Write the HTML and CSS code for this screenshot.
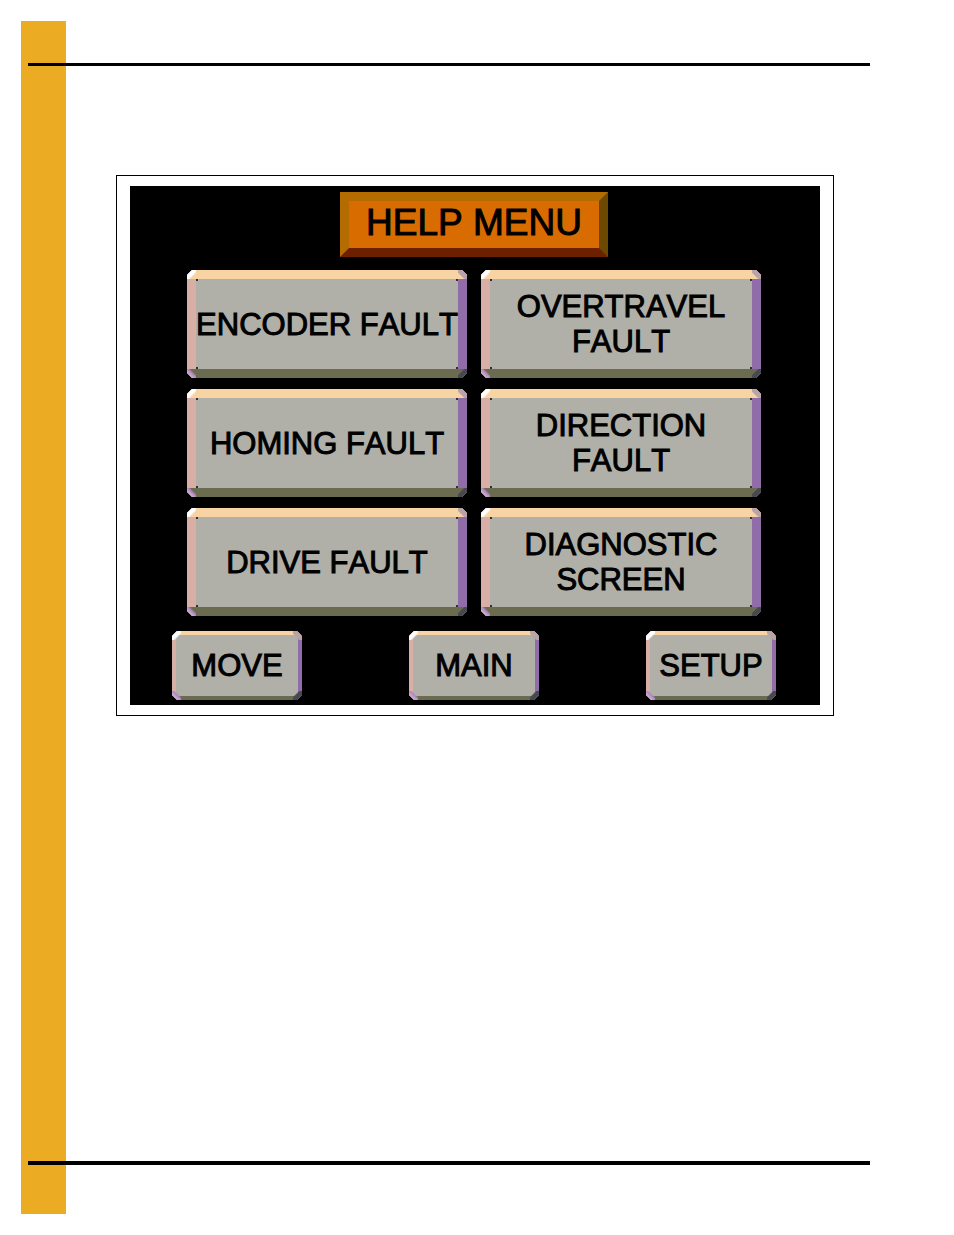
FILE: index.html
```
<!DOCTYPE html>
<html lang="en">
<head>
    <meta charset="UTF-8">
    <meta name="viewport" content="width=device-width, initial-scale=1.0">
    <title>Help Menu</title>
    <link rel="stylesheet" href="styles.css">
</head>
<body>

    <div class="page">
        <hr class="rule rule-top">
        <main class="frame">
            <div class="screen">
                <h1 class="title">HELP MENU</h1>
                <div class="faults">
                    <button type="button" class="key">ENCODER FAULT</button>
                    <button type="button" class="key">OVERTRAVEL<br>FAULT</button>
                    <button type="button" class="key">HOMING FAULT</button>
                    <button type="button" class="key">DIRECTION<br>FAULT</button>
                    <button type="button" class="key">DRIVE FAULT</button>
                    <button type="button" class="key">DIAGNOSTIC<br>SCREEN</button>
                </div>
                <nav class="navigation">
                    <button type="button" class="key key-small">MOVE</button>
                    <button type="button" class="key key-small">MAIN</button>
                    <button type="button" class="key key-small">SETUP</button>
                </nav>
            </div>
        </main>
        <hr class="rule rule-bottom">
    </div>

</body>
</html>
```

FILE: styles.css
```
* {
    box-sizing: border-box;
}
body {
    margin: 0;
    padding: 21px 84px 21px 21px;
    min-height: 100vh;
    display: flex;
    background: #fff;
    font-family: "Liberation Sans", Arial, sans-serif;
    font-kerning: none;
}
.page {
    flex: 1;
    display: flex;
    flex-direction: column;
    padding: 42px 0 49px;
    background: linear-gradient(#ebac23, #ebac23) left / 45px 100% no-repeat;
}
.rule {
    align-self: stretch;
    margin: 0 0 0 7px;
    border: none;
    background: #000;
}
.rule-top {
    height: 3px;
}
.rule-bottom {
    height: 4px;
    margin-top: auto;
}
.frame {
    margin: 109px 36px 40px 95px;
    padding: 10px 13px;
    border: 1px solid #000;
}
.screen {
    padding: 6px 44px 5px 42px;
    background: #000;
}
.title {
    width: fit-content;
    margin: 0 auto;
    padding: 0 17px 3px;
    border: 9px solid;
    border-color: #b46c00 #6c4800 #6c2000 #b46c00;
    background: #d86c00;
    color: #000;
    font-size: 37px;
    font-weight: normal;
    line-height: 44px;
    -webkit-text-stroke: 1px #000;
}
.faults {
    display: grid;
    grid-template-columns: 1fr 1fr;
    grid-auto-rows: 108px;
    gap: 11px 14px;
    padding: 13px 15px 15px;
}
.navigation {
    display: flex;
    justify-content: space-between;
}
.key {
    --bevel: 9px;
    --corner: 9px;
    --dot: #303038;
    padding: 0;
    border: none;
    color: #000;
    font-family: inherit;
    font-size: 31px;
    font-kerning: none;
    line-height: 35px;
    white-space: nowrap;
    cursor: pointer;
    -webkit-text-stroke: 1px #000;
    clip-path: polygon(5px 0, calc(100% - 5px) 0, 100% 5px, 100% calc(100% - 5px), calc(100% - 5px) 100%, 5px 100%, 0 calc(100% - 5px), 0 5px);
    /* inner corner dots, four corners, then the top, bottom, left and right bevels */
    background:
        linear-gradient(var(--dot), var(--dot)) left 9px top 9px / 2px 2px,
        linear-gradient(var(--dot), var(--dot)) right 9px top 9px / 2px 2px,
        linear-gradient(var(--dot), var(--dot)) left 9px bottom 9px / 2px 2px,
        linear-gradient(var(--dot), var(--dot)) right 9px bottom 9px / 2px 2px,
        linear-gradient(315deg, transparent 30%, #fff 45% 60%, #f0d8f0) left top / var(--corner) var(--corner),
        linear-gradient(45deg, transparent 30%, #b8a4a8 40% 60%, #b490b4) right top / var(--corner) var(--corner),
        linear-gradient(225deg, transparent 30%, #b088c0 45%, #d0b0d0 70%) left bottom / var(--corner) var(--corner),
        linear-gradient(135deg, transparent 30%, #484850 40%) right bottom / var(--corner) var(--corner),
        linear-gradient(#f8d4a4, #f8d4a4) top / 100% var(--bevel),
        linear-gradient(#6b6b50, #6b6b50) bottom / 100% var(--bevel),
        linear-gradient(#d8aea6, #d8aea6) left / var(--bevel) 100%,
        linear-gradient(#906ca8, #906ca8) right / var(--bevel) 100%,
        #b0b0a8;
    background-repeat: no-repeat;
}
.key:active {
    filter: brightness(0.9);
}
.key-small {
    --bevel: 4px;
    --dot: transparent;
    width: 130px;
    height: 69px;
}
```
